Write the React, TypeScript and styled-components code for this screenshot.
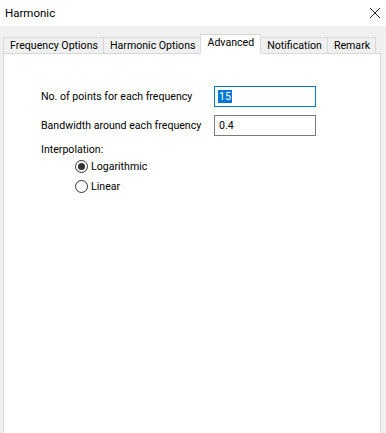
import * as React from 'react';
import styled, { createGlobalStyle } from 'styled-components';

const GlobalStyle = createGlobalStyle`
  html, body {
    margin: 0;
    padding: 0;
    background: #f0f0f0;
  }
  body {
    font-family: Roboto, 'Noto Sans', sans-serif;
    font-size: 10.6px;
    color: #000;
  }
`;

const Window = styled.div`
  width: 386px;
  height: 433px;
  display: flex;
  flex-direction: column;
  overflow: hidden;
  background: #f0f0f0;
`;

const TitleBar = styled.div`
  height: 25px;
  flex: none;
  background: #ffffff;
  display: flex;
  align-items: center;
  justify-content: space-between;
  padding: 0 5px 1px 5px;
  font-size: 11.5px;
`;

const CloseIcon = styled.svg`
  width: 12px;
  height: 12px;
`;

const TabStrip = styled.div`
  display: flex;
  align-items: flex-end;
  height: 20px;
  margin-top: 7px;
  padding-left: 3px;
  position: relative;
  z-index: 1;
`;

const Tab = styled.div<{ $active?: boolean }>`
  box-sizing: border-box;
  height: ${(p) => (p.$active ? '20px' : '16px')};
  padding: ${(p) => (p.$active ? '1px 6px 0 6px' : '0 5px 0 6px')};
  display: flex;
  align-items: ${(p) => (p.$active ? 'flex-start' : 'center')};
  background: ${(p) => (p.$active ? '#ffffff' : '#f0f0f0')};
  border: 1px solid #d9d9d9;
  border-bottom: ${(p) => (p.$active ? '1px solid #ffffff' : 'none')};
  margin-left: -1px;
  white-space: nowrap;
  margin-bottom: ${(p) => (p.$active ? '-1px' : '0')};
  &:first-child {
    margin-left: 0;
  }
`;

const Panel = styled.div`
  flex: 1;
  margin: 0 5px 0 3px;
  background: #ffffff;
  border: 1px solid #d9d9d9;
  border-bottom: none;
  padding: 32px 0 0 37px;
`;

const FieldGrid = styled.div`
  display: grid;
  grid-template-columns: 173px 102px;
  row-gap: 8px;
  align-items: center;
`;

const Label = styled.span`
  white-space: nowrap;
`;

const TextBox = styled.div<{ $focused?: boolean }>`
  box-sizing: border-box;
  height: 21px;
  border: 1px solid ${(p) => (p.$focused ? '#0078d7' : '#7a7a7a')};
  background: #ffffff;
  display: flex;
  align-items: center;
  padding-left: 4px;
`;

const Selected = styled.span`
  background: #0078d7;
  color: #ffffff;
  padding: 0 1px;
  margin-left: -1px;
`;

const GroupLabel = styled.div`
  margin-top: 7px;
`;

const RadioList = styled.div`
  display: flex;
  flex-direction: column;
  gap: 6px;
  margin-top: 3px;
  padding-left: 34px;
`;

const RadioRow = styled.label`
  display: flex;
  align-items: center;
  gap: 3px;
  height: 14px;
`;

const RadioCircle = styled.span<{ $checked?: boolean }>`
  box-sizing: border-box;
  width: 13px;
  height: 13px;
  border-radius: 50%;
  border: 1px solid #333333;
  background: #ffffff;
  display: flex;
  align-items: center;
  justify-content: center;
  &::after {
    content: '';
    width: 7px;
    height: 7px;
    border-radius: 50%;
    background: ${(p) => (p.$checked ? '#333333' : 'transparent')};
  }
`;

const tabs = ['Frequency Options', 'Harmonic Options', 'Advanced', 'Notification', 'Remark'];

export default function App() {
  return (
    <Window>
      <GlobalStyle />
      <TitleBar>
        <span>Harmonic</span>
        <CloseIcon viewBox="0 0 12 12">
          <path d="M1 1 L11 11 M11 1 L1 11" stroke="#222" strokeWidth="1" fill="none" />
        </CloseIcon>
      </TitleBar>
      <TabStrip>
        {tabs.map((t) => (
          <Tab key={t} $active={t === 'Advanced'}>
            {t}
          </Tab>
        ))}
      </TabStrip>
      <Panel>
        <FieldGrid>
          <Label>No. of points for each frequency</Label>
          <TextBox $focused>
            <Selected>15</Selected>
          </TextBox>
          <Label>Bandwidth around each frequency</Label>
          <TextBox>0.4</TextBox>
        </FieldGrid>
        <GroupLabel>Interpolation:</GroupLabel>
        <RadioList>
          <RadioRow>
            <RadioCircle $checked />
            Logarithmic
          </RadioRow>
          <RadioRow>
            <RadioCircle />
            Linear
          </RadioRow>
        </RadioList>
      </Panel>
    </Window>
  );
}
